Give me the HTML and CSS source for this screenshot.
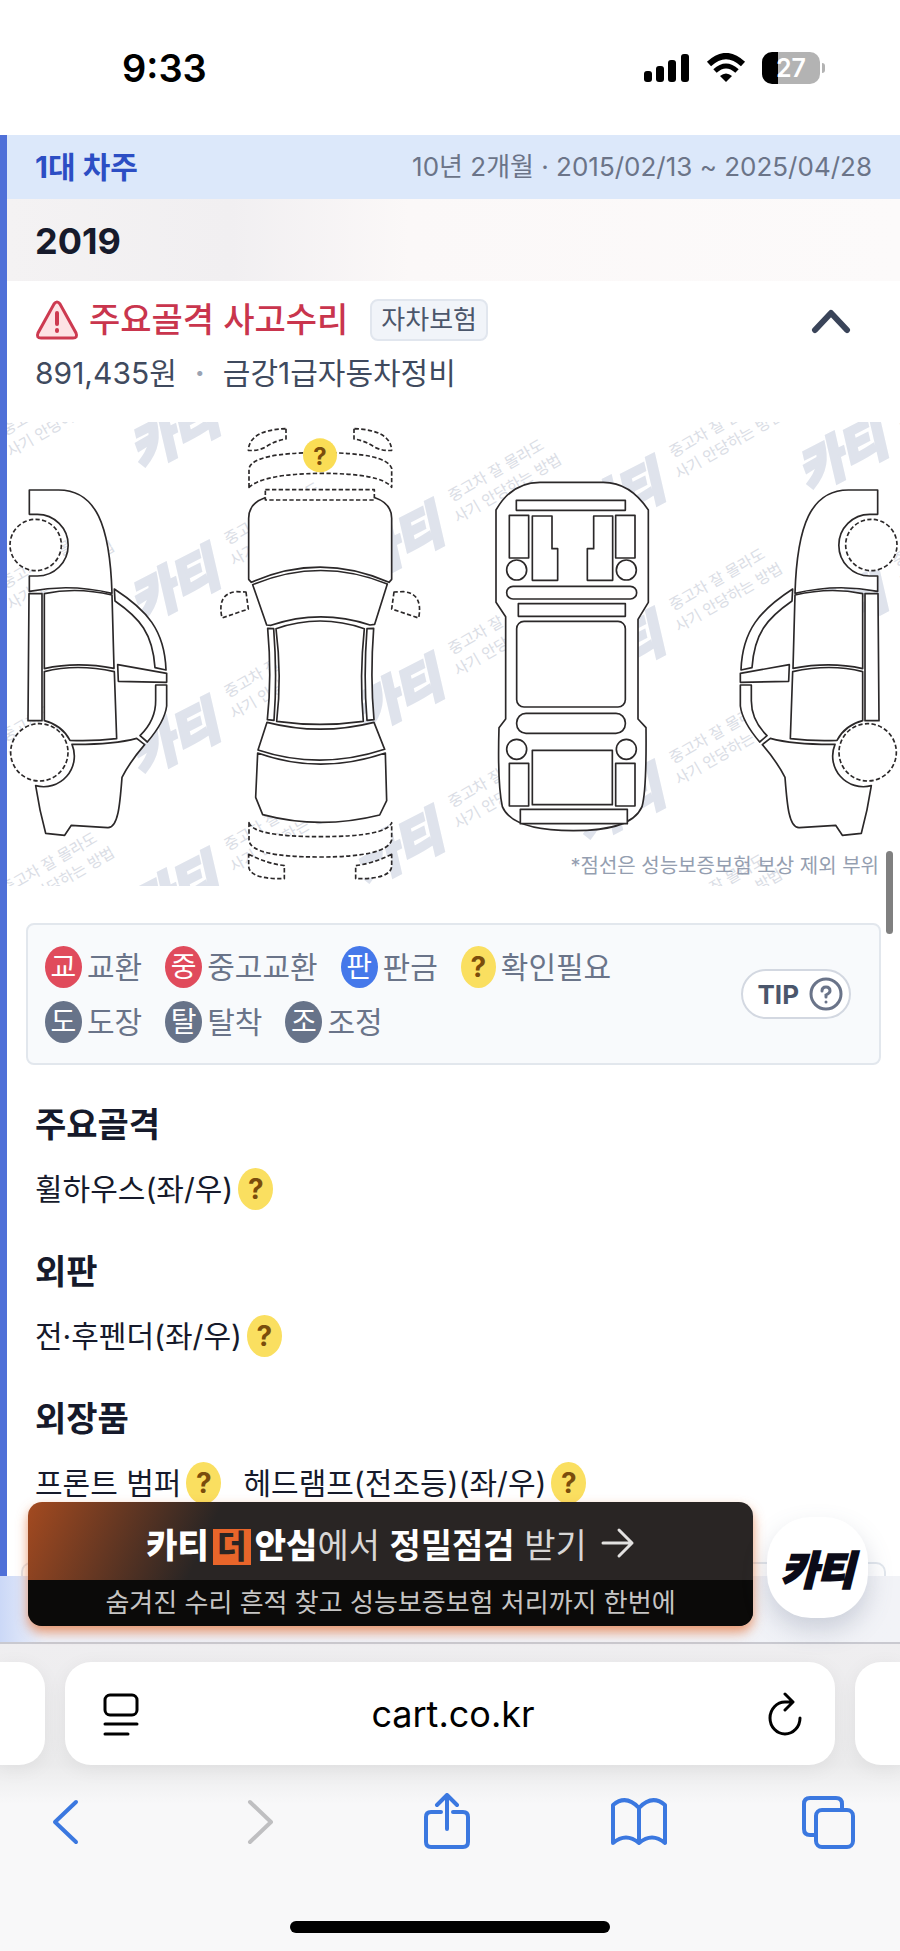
FILE: index.html
```
<!DOCTYPE html>
<html lang="ko">
<head>
  <meta charset="UTF-8" />
  <meta name="viewport" content="width=device-width, initial-scale=1.0" />
  <title>카티 - 사고수리 이력</title>
  <link rel="stylesheet" href="styles.css">
</head>
<body>
  <header class="status-bar">
    <span class="clock">9:33</span>
    <div class="status-icons">
      <svg width="46" height="30" viewBox="0 0 46 30">
        <rect x="0" y="18" width="8" height="11" rx="3"/>
        <rect x="12" y="13" width="8" height="16" rx="3"/>
        <rect x="24" y="7" width="8" height="22" rx="3"/>
        <rect x="37" y="1" width="8" height="28" rx="3"/>
      </svg>
      <svg width="40" height="30" viewBox="0 0 40 30">
        <path d="M3 11Q20 -5 37 11" fill="none" stroke="#000" stroke-width="6"/>
        <path d="M9 18Q20 8 31 18" fill="none" stroke="#000" stroke-width="5"/>
        <path d="M20 29L14 23Q20 18 26 23Z"/>
      </svg>
      <div class="battery"><span>27</span></div>
    </div>
  </header>

  <div class="viewport">
    <main class="page">
      <div class="owner">
        <strong>1대 차주</strong>
        <span>10년 2개월 · 2015/02/13 ~ 2025/04/28</span>
      </div>
      <h2 class="year">2019</h2>

      <section class="record">
        <div class="record-title">
          <svg class="warn" width="44" height="40" viewBox="0 0 44 40">
            <path d="M19 4Q22 0 25 4L41 33Q43 38 38 38H6Q1 38 3 33Z" fill="#fde3e5" stroke="#cd3a50" stroke-width="3"/>
            <path d="M22 13V24M22 30V31" stroke="#cd3a50" stroke-width="4" stroke-linecap="round"/>
          </svg>
          <h3>주요골격 사고수리</h3>
          <span class="tag">자차보험</span>
          <button class="toggle" aria-label="접기">
            <svg width="42" height="28" viewBox="0 0 42 28"><path d="M5 24L21 7L37 24" fill="none" stroke="#3a4459" stroke-width="6" stroke-linecap="round" stroke-linejoin="round"/></svg>
          </button>
        </div>
        <p class="meta"><span>891,435원</span><i>·</i><span>금강1급자동차정비</span></p>
      </section>

      <div class="diagram">
        <svg viewBox="21 36 2679 1392">
          <defs>
            <g id="mark">
              <g transform="rotate(-27)">
                <text class="mark-logo" x="-152" y="58">카티</text>
              </g>
              <g transform="rotate(-30)" class="mark-text">
                <text x="190" y="-22">중고차 잘 몰라도</text>
                <text x="172" y="42">사기 안당하는 방법</text>
              </g>
            </g>
            <g id="side">
              <path d="M342 537Q494 640 498 780L500 816V890L432 1000L350 985Z" stroke="none"/>
              <path d="M88 240H170C290 236 330 350 336 550Q210 520 88 544V498H112A92 92 0 0 0 112 313H88Z"/>
              <path d="M87 551H126V932H84Z"/>
              <path d="M133 551Q230 530 336 555L342 775Q230 754 133 776Z"/>
              <path d="M133 785Q230 760 343 785L350 986Q280 994 210 991Q185 945 133 932Z"/>
              <path d="M343 537C440 600 494 660 498 780L465 773C458 670 420 625 345 573Z"/>
              <path d="M353 764L500 790V817L355 814Z"/>
              <path d="M467 825H500V888Q494 935 442 996L420 977Q468 930 467 870Z"/>
              <path d="M216 1003Q340 1004 410 985L434 1004Q390 1055 366 1102C360 1180 355 1255 323 1253L214 1246L194 1276L137 1270Q118 1200 107 1127A92 92 0 0 0 216 1003Z"/>
              <circle cx="107" cy="405" r="77" class="dash"/>
              <circle cx="118" cy="1027" r="86" class="dash"/>
            </g>
          </defs>

          <use href="#mark" x="-138" y="192"/>
          <use href="#mark" x="-138" y="651"/>
          <use href="#mark" x="-138" y="1110"/>
          <use href="#mark" x="-138" y="1569"/>
          <use href="#mark" x="531" y="60"/>
          <use href="#mark" x="531" y="519"/>
          <use href="#mark" x="531" y="978"/>
          <use href="#mark" x="531" y="1437"/>
          <use href="#mark" x="1203" y="390"/>
          <use href="#mark" x="1203" y="849"/>
          <use href="#mark" x="1203" y="1308"/>
          <use href="#mark" x="1866" y="258"/>
          <use href="#mark" x="1866" y="717"/>
          <use href="#mark" x="1866" y="1176"/>
          <use href="#mark" x="1866" y="1635"/>
          <use href="#mark" x="2535" y="126"/>
          <use href="#mark" x="2535" y="585"/>

          <g class="line">
            <use href="#side"/>
            <use href="#side" transform="translate(2721 0) scale(-1 1)"/>

            <!-- top view -->
            <g transform="translate(600 0)">
              <g class="dash">
                <path d="M258 56V87Q225 92 195 112Q170 124 145 121Q148 60 258 56Z"/>
                <path d="M462 56V87Q495 92 525 112Q550 124 575 121Q572 60 462 56Z"/>
                <path d="M147 232V175Q160 128 360 128Q560 128 575 175V232Q545 190 360 190Q190 192 147 232Z"/>
                <path d="M138 546L145 597L66 624Q50 550 110 545Z"/>
                <path d="M582 546L575 597L656 624Q670 550 610 545Z"/>
                <path d="M147 1238Q160 1280 360 1280Q560 1280 575 1238V1290Q560 1341 360 1341Q150 1341 147 1290Z"/>
                <path d="M146 1333Q200 1360 253 1367V1406Q150 1408 146 1370Z"/>
                <path d="M575 1333Q520 1360 467 1367V1406Q570 1408 575 1370Z"/>
              </g>
              <path d="M195 263Q146 280 146 325V508L154 517Q360 426 567 517L575 508V325Q575 280 525 263Z"/>
              <rect x="196" y="239" width="327" height="31" class="dash"/>
              <path d="M158 524Q360 440 562 522L524 643L510 645Q360 596 213 646L200 645Z"/>
              <path d="M203 655L221 656Q232 800 222 931L202 929Q216 800 203 655Z"/>
              <path d="M521 655L501 656Q490 800 501 931L522 929Q510 800 521 655Z"/>
              <path d="M228 656Q360 610 493 656Q478 800 490 934Q360 952 230 934Q246 800 228 656Z"/>
              <path d="M201 937Q360 978 522 937L554 1018Q360 1082 174 1020Z"/>
              <path d="M173 1029Q360 1096 556 1029L560 1172L539 1215Q360 1260 188 1214L167 1162Z"/>
            </g>

            <!-- under view -->
            <g transform="translate(1380 0)">
              <path d="M108 300Q155 217 240 217H430Q510 217 565 300V577L534 628V927L558 953Q560 1140 546 1190C520 1250 430 1262 340 1262C240 1262 150 1245 127 1190Q112 1120 117 953L137 927V620L108 577Z"/>
              <rect x="169" y="271" width="327" height="30"/>
              <rect x="148" y="316" width="58" height="128"/>
              <rect x="467" y="316" width="58" height="128"/>
              <path d="M217 318H276V416H293V511H217Z"/>
              <path d="M458 318H401V416H382V511H458Z"/>
              <circle cx="170" cy="480" r="30"/>
              <circle cx="499" cy="480" r="30"/>
              <rect x="140" y="529" width="390" height="38" rx="19"/>
              <rect x="175" y="581" width="321" height="38"/>
              <rect x="170" y="634" width="326" height="257" rx="22"/>
              <rect x="170" y="910" width="326" height="60" rx="28"/>
              <circle cx="170" cy="1018" r="30"/>
              <circle cx="499" cy="1018" r="30"/>
              <rect x="148" y="1060" width="58" height="128"/>
              <rect x="467" y="1060" width="58" height="128"/>
              <rect x="217" y="1021" width="240" height="163"/>
              <rect x="181" y="1198" width="321" height="43"/>
            </g>
          </g>
          <circle cx="960" cy="136" r="51" fill="#fadd55"/>
          <text class="pin" x="960" y="164">?</text>
        </svg>
        <p class="note">*점선은 성능보증보험 보상 제외 부위</p>
        <div class="scroll-thumb"></div>
      </div>

      <div class="legend">
        <div class="legend-rows">
          <ul>
            <li><b class="chip red">교</b>교환</li>
            <li><b class="chip red">중</b>중고교환</li>
            <li><b class="chip blue">판</b>판금</li>
            <li><b class="chip yellow">?</b>확인필요</li>
          </ul>
          <ul>
            <li><b class="chip gray">도</b>도장</li>
            <li><b class="chip gray">탈</b>탈착</li>
            <li><b class="chip gray">조</b>조정</li>
          </ul>
        </div>
        <button class="tip">TIP
          <svg width="34" height="34" viewBox="0 0 34 34" fill="none" stroke="#6a7489" stroke-width="3" stroke-linecap="round">
            <circle cx="17" cy="17" r="15"/>
            <path d="M13 14Q13 10 17 10Q21 10 21 14Q21 16 17 18V20M17 25V25"/>
          </svg>
        </button>
      </div>

      <section class="parts">
        <h4>주요골격</h4>
        <p><span>휠하우스(좌/우)<b class="chip yellow">?</b></span></p>
        <h4>외판</h4>
        <p><span>전·후펜더(좌/우)<b class="chip yellow">?</b></span></p>
        <h4>외장품</h4>
        <p><span>프론트 범퍼<b class="chip yellow">?</b></span><span>헤드램프(전조등)(좌/우)<b class="chip yellow">?</b></span></p>
      </section>
      <div class="next-card"></div>
    </main>
    <div class="page-edge"></div>

    <div class="dock">
      <button class="cta">
        <span class="cta-main"><span><strong class="brand">카티</strong><b class="the">더</b><strong class="brand">안심</strong>에서 <strong>정밀점검</strong> 받기</span>
          <svg width="34" height="34" viewBox="0 0 34 34" fill="none" stroke="#e2e1e0" stroke-width="3" stroke-linecap="round" stroke-linejoin="round"><path d="M2 17H31M18 4L31 17L18 30"/></svg>
        </span>
        <span class="cta-sub">숨겨진 수리 흔적 찾고 성능보증보험 처리까지 한번에</span>
      </button>
      <button class="home-logo">카티</button>
    </div>
  </div>

  <footer class="browser">
    <div class="tabs">
      <div class="tab-peek left"></div>
      <div class="address">
        <button aria-label="페이지 메뉴">
          <svg width="36" height="44" viewBox="0 0 36 44" fill="none" stroke="#000" stroke-width="3" stroke-linecap="round"><rect x="2" y="3" width="32" height="20" rx="5"/><path d="M2 32H34M2 42H25"/></svg>
        </button>
        <input type="text" value="cart.co.kr" aria-label="주소">
        <button aria-label="새로고침">
          <svg width="36" height="44" viewBox="0 0 36 44" fill="none" stroke="#000" stroke-width="3" stroke-linecap="round" stroke-linejoin="round"><path d="M18 2L26 10L18 18M25 10H18A15 16 0 1 0 33 26"/></svg>
        </button>
      </div>
      <div class="tab-peek right"></div>
    </div>
    <nav class="tools">
      <button aria-label="뒤로"><svg width="56" height="56" viewBox="0 0 56 56"><path d="M40 9L19 29L40 49"/></svg></button>
      <button aria-label="앞으로" class="off"><svg width="56" height="56" viewBox="0 0 56 56"><path d="M22 9L43 29L22 49"/></svg></button>
      <button aria-label="공유"><svg width="56" height="56" viewBox="0 0 56 56"><path d="M22 19H12Q7 19 7 24V49Q7 54 12 54H44Q49 54 49 49V24Q49 19 44 19H34M28 36V3M18 12L28 2L38 12"/></svg></button>
      <button aria-label="책갈피"><svg width="56" height="56" viewBox="0 0 56 56"><path d="M28 15Q15 1 2 12V50Q15 39 28 50Q41 39 54 50V12Q41 1 28 15V50"/></svg></button>
      <button aria-label="탭"><svg width="56" height="56" viewBox="0 0 56 56"><path d="M14 42H8Q2 42 2 36V11Q2 5 8 5H34Q40 5 40 11V16"/><rect x="14" y="17" width="37" height="37" rx="6"/></svg></button>
    </nav>
    <div class="home-bar"></div>
  </footer>
</body>
</html>
```
FILE: styles.css
```
* { box-sizing: border-box; }
body { margin: 0; background: #fff; color: #161a2b; font-family: Inter, "Noto Sans CJK KR", sans-serif; font-size: 30px; line-height: 40px; }
h2, h3, h4, p, ul { margin: 0; padding: 0; }
button { font-family: inherit; border: none; background: none; padding: 0; cursor: pointer; }
svg { display: block; }

.status-bar { height: 135px; padding: 0 80px 0 122px; display: flex; justify-content: space-between; align-items: center; }
.clock { font-size: 38px; font-weight: 600; color: #000; }
.status-icons { display: flex; align-items: center; gap: 16px; }
.battery { position: relative; width: 58px; height: 32px; border-radius: 10px; background: linear-gradient(90deg, #000 27%, #b3b3b3 27%); color: #fff; font-size: 25px; font-weight: 600; line-height: 32px; text-align: center; }
.battery::after { content: ""; position: absolute; right: -5px; top: 11px; width: 3px; height: 10px; border-radius: 0 3px 3px 0; background: #b3b3b3; }

.viewport { position: relative; }
.page { border-left: 7px solid #4f70d8; }
.owner { height: 64px; padding: 0 28px; display: flex; justify-content: space-between; align-items: center; background: #dce8fa; color: #6b7488; font-size: 26px; }
.owner strong { color: #2c4ec4; font-size: 30px; }
.year { height: 82px; padding: 0 28px; line-height: 84px; font-size: 36px; font-weight: 700; background: linear-gradient(90deg, #f4f2f3, #f1eff1 25%, #fbf8f8 45%, #fcfafa); }

.record { padding: 18px 28px 29px; }
.record-title { display: flex; align-items: center; height: 42px; margin-bottom: 12px; }
.record-title h3 { margin-left: 10px; color: #c9354d; font-size: 34px; font-weight: 500; }
.tag { margin-left: 22px; padding: 0 9px; border: 2px solid #e1e6ee; border-radius: 8px; background: #f1f4f9; color: #4b566b; font-size: 26px; line-height: 38px; }
.toggle { margin-left: auto; margin-right: 20px; }
.meta { color: #3f4a5e; }
.meta i { margin: 0 18px; color: #9aa3b3; font-style: normal; font-weight: 700; }

.diagram { position: relative; }
.diagram svg { width: 100%; overflow: hidden; }
.line { fill: #fff; stroke: #2b2829; stroke-width: 5; stroke-linejoin: round; }
.dash { stroke-width: 5; stroke-dasharray: 13 7; }
.mark-logo { font-size: 150px; font-weight: 900; font-style: oblique; fill: #dfe3ec; stroke: #dfe3ec; stroke-width: 9; }
.mark-text { font-size: 46px; fill: #dadde5; }
.pin { font-size: 72px; font-weight: 700; text-anchor: middle; fill: #7a4d0c; }
.note { position: absolute; right: 21px; bottom: 0; color: #949eb0; font-size: 20px; }
.scroll-thumb { position: absolute; right: 7px; bottom: -48px; width: 7px; height: 83px; border-radius: 4px; background: #808080; }

.legend { margin: 37px 19px 0; padding: 20px 28px 20px 17px; min-height: 142px; display: flex; justify-content: space-between; align-items: center; border: 2px solid #e2e7ed; border-radius: 8px; background: #f8fafc; color: #6a7489; }
.legend-rows { display: grid; gap: 13px; }
.legend ul { display: flex; gap: 23px; list-style: none; }
.legend li { display: flex; align-items: center; gap: 5px; line-height: 42px; }
.chip { display: inline-block; width: 37px; height: 42px; border-radius: 50%; color: #fff; font-size: 28px; font-weight: 400; line-height: 42px; text-align: center; }
.red { background: #e04b5c; }
.blue { background: #4578ea; }
.gray { background: #677389; }
.yellow { width: 35px; background: #fadf60; color: #7a4d0c; font-size: 28px; font-weight: 700; }
.tip { display: flex; align-items: center; gap: 10px; height: 50px; padding: 0 6px 0 14px; border: 2px solid #d3d8e1; border-radius: 25px; background: #fff; color: #4b566b; font-size: 26px; font-weight: 700; }

.parts { padding: 0 28px; }
.parts h4 { margin-top: 38px; font-size: 34px; line-height: 44px; font-weight: 700; }
.parts p { display: flex; gap: 22px; margin-top: 21px; }
.parts p + h4 { margin-top: 40px; }
.parts span { display: flex; gap: 5px; line-height: 42px; }
.next-card { height: 14px; margin: 58px 14px 0; border: 2px solid #e2e7ed; border-bottom: none; border-radius: 10px 10px 0 0; }
.page-edge { height: 68px; border-bottom: 2px solid #c9c9d0; background: linear-gradient(90deg, #cbd8f7, #edf1fa 5%, #f2f3f7); }

.dock { position: absolute; left: 28px; right: 32px; bottom: 18px; display: flex; align-items: flex-end; gap: 14px; }
.cta { flex: 1; overflow: hidden; border-radius: 14px; background: linear-gradient(115deg, #a44a20, #292524 25%); box-shadow: 0 6px 12px rgba(226, 110, 50, .7); color: #d8d6d5; font-size: 34px; }
.cta span { display: block; }
.cta .cta-main { display: flex; align-items: center; justify-content: center; gap: 14px; height: 78px; padding-top: 4px; }
.cta strong { color: #fff; font-weight: 700; }
.cta .brand { font-weight: 900; }
.the { display: inline-block; width: 38px; margin: 0 4px; background: #e8652a; color: #292524; font-size: 32px; line-height: 36px; text-align: center; font-weight: 900; }
.cta .cta-sub { height: 46px; background: #0b0a09; color: #c6c5c4; font-size: 26px; line-height: 46px; }
.home-logo { width: 101px; height: 101px; margin-bottom: 8px; border-radius: 44px; background: #fff; box-shadow: 0 12px 24px rgba(90, 105, 130, .25); color: #0b0b18; font-size: 40px; font-weight: 900; font-style: oblique; -webkit-text-stroke: 2px #0b0b18; }

.browser { background: linear-gradient(#efeef0, #ebebec 120px, #f8f8f9 160px, #f8f8f9); }
.tabs { display: flex; gap: 20px; padding-top: 18px; }
.tab-peek { flex: 0 0 45px; background: #fff; box-shadow: 0 4px 20px rgba(0, 0, 0, .06); }
.left { border-radius: 0 26px 26px 0; }
.right { border-radius: 26px 0 0 26px; }
.address { flex: 1; display: flex; align-items: center; height: 103px; padding: 0 32px 0 38px; border-radius: 26px; background: #fff; box-shadow: 0 4px 20px rgba(0, 0, 0, .06); }
.address input { flex: 1; min-width: 0; border: none; outline: none; background: none; color: #000; font-family: inherit; font-size: 36px; text-align: center; }
.tools { display: flex; justify-content: space-between; padding: 28px 42px 0 36px; }
.tools path, .tools rect { fill: none; stroke: #3b78e0; stroke-width: 4; stroke-linecap: round; stroke-linejoin: round; }
.tools .off path { stroke: #bfbfc1; }
.home-bar { width: 320px; height: 12px; margin: 72px auto 0; border-radius: 6px; background: #000; }
.browser::after { content: ""; display: block; height: 18px; }
```
